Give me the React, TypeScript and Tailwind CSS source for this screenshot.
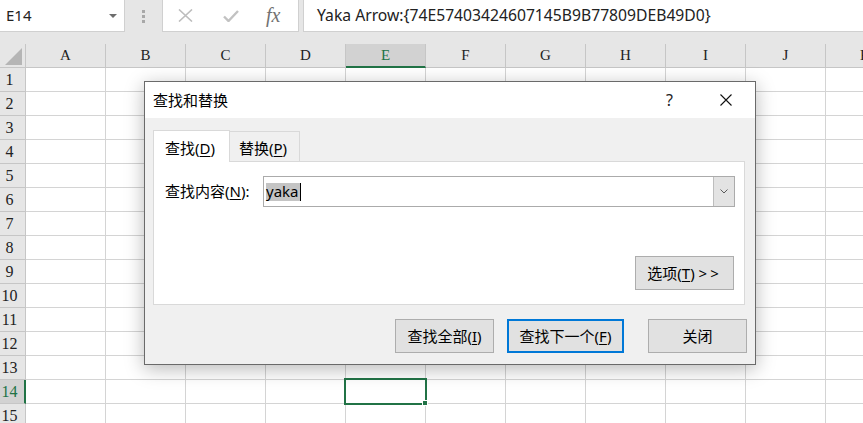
import React from 'react';

const COLS = ['A', 'B', 'C', 'D', 'E', 'F', 'G', 'H', 'I', 'J', 'K'];
const ROWS = Array.from({ length: 15 }, (_, i) => i + 1);

const ui = "font-['Noto_Sans','Noto_Sans_CJK_SC',sans-serif]";
const serif = "font-['Liberation_Serif',serif]";

function FormulaBar() {
  return (
    <div className={`flex h-[44px] items-start bg-[#e6e6e6] ${ui}`}>
      {/* Name box */}
      <div className="flex h-[32px] w-[125px] items-center justify-between border-r border-b border-[#d0d0d0] bg-white pl-[6px] pr-[7px] text-[15px] text-[#222]">
        <span>E14</span>
        <svg width="8" height="4" viewBox="0 0 8 4">
          <path d="M0 0h8L4 4z" fill="#6d6d6d" />
        </svg>
      </div>

      {/* Grip */}
      <div className="flex h-[32px] w-[37px] flex-col items-center justify-center gap-[2px]">
        {[0, 1, 2].map((i) => (
          <span key={i} className="h-[3px] w-[3px] bg-[#a8a8a8]" />
        ))}
      </div>

      {/* Cancel / enter / fx */}
      <div className="flex h-[32px] w-[137px] items-center border-x border-b border-[#d0d0d0] bg-white pl-[15px]">
        <svg width="15" height="13" viewBox="0 0 15 13">
          <path d="M1 0.5l13 12M14 0.5l-13 12" stroke="#bdbdbd" strokeWidth="1.6" fill="none" />
        </svg>
        <svg className="ml-[30px]" width="16" height="12" viewBox="0 0 16 12">
          <path d="M1 6.5l4.5 4.5L15 1" stroke="#c2c2c2" strokeWidth="2.4" fill="none" />
        </svg>
        <span className={`ml-[27px] -mt-[2px] text-[20px] italic text-[#727272] ${serif}`}>fx</span>
      </div>

      {/* Formula input */}
      <div className="ml-[4px] flex h-[32px] flex-1 items-center border-l border-b border-[#d0d0d0] bg-white pl-[13px] text-[15.7px] text-[#222] whitespace-nowrap">
        Yaka Arrow:{'{'}74E57403424607145B9B77809DEB49D0{'}'}
      </div>
    </div>
  );
}

function Sheet() {
  return (
    <div className={`relative grid grid-cols-[26px_repeat(11,80px)] auto-rows-[24px] text-[15px] text-[#222] ${serif}`}>
      {/* Corner */}
      <div className="flex items-end justify-end border-r border-b border-[#c6c6c6] bg-[#e6e6e6] pr-[3px] pb-[2px]">
        <svg width="17" height="17" viewBox="0 0 17 17">
          <path d="M17 0v17H0z" fill="#b5b5b5" />
        </svg>
      </div>
      {COLS.map((c) =>
        c === 'E' ? (
          <div key={c} className="flex items-center justify-center border-r border-b-2 border-r-[#c6c6c6] border-b-[#217346] bg-[#d2d2d2] text-[#217346]">
            {c}
          </div>
        ) : (
          <div key={c} className="flex items-center justify-center border-r border-b border-[#c6c6c6] bg-[#e6e6e6]">
            {c}
          </div>
        )
      )}

      {ROWS.map((r) => (
        <React.Fragment key={r}>
          {r === 14 ? (
            <div className="flex items-center justify-center border-r-2 border-b border-r-[#217346] border-b-[#c6c6c6] bg-[#d2d2d2] pr-[5px] text-[16px] text-[#217346]">
              {r}
            </div>
          ) : (
            <div className="flex items-center justify-center border-r border-b border-[#c6c6c6] bg-[#e6e6e6] pr-[6px] text-[16px]">
              {r}
            </div>
          )}
          {COLS.map((c) => (
            <div key={c} className="border-r border-b border-[#d4d4d4] bg-white" />
          ))}
        </React.Fragment>
      ))}

      {/* Active cell E14 */}
      <div className="absolute left-[344px] top-[334px] h-[27px] w-[83px] border-2 border-[#217346]">
        <span className="absolute -right-[3px] -bottom-[3px] h-[6px] w-[6px] border border-white bg-[#217346]" />
      </div>
    </div>
  );
}

function DlgButton({ children, focused, className = '' }: { children: React.ReactNode; focused?: boolean; className?: string }) {
  return (
    <div
      className={`flex h-[34px] items-center justify-center bg-[#e1e1e1] text-[15px] text-black ${
        focused ? 'border-2 border-[#0078d7]' : 'border border-[#adadad]'
      } ${className}`}
    >
      {children}
    </div>
  );
}

function FindDialog() {
  return (
    <div className={`absolute left-[144px] top-[81px] flex h-[284px] w-[612px] flex-col border border-[#6a6a6a] bg-[#f0f0f0] shadow-[0_4px_18px_rgba(0,0,0,0.28)] ${ui}`}>
      {/* Title bar */}
      <div className="flex h-[36px] items-center bg-white pl-[8px] pr-[23px] text-[15px] text-black">
        <span>查找和替换</span>
        <span className="ml-auto text-[16px] text-[#222]">?</span>
        <svg className="ml-[47px]" width="12" height="12" viewBox="0 0 12 12">
          <path d="M0.5 0.5l11 11M11.5 0.5l-11 11" stroke="#111" strokeWidth="1.1" fill="none" />
        </svg>
      </div>

      <div className="flex flex-1 flex-col px-[8px] pt-[12px] text-[15px] text-black">
        {/* Tabs */}
        <div className="flex h-[31px] items-end">
          <div className="relative z-10 -mb-px flex h-[32px] w-[77px] items-center border border-b-0 border-[#d9d9d9] bg-white pl-[11px] pt-[3px]">
            查找(<span className="underline underline-offset-2">D</span>)
          </div>
          <div className="flex h-[30px] w-[70px] items-center border border-l-0 border-b-0 border-[#d9d9d9] pl-[9px] pt-[3px]">
            替换(<span className="underline underline-offset-2">P</span>)
          </div>
        </div>

        {/* Panel */}
        <div className="flex h-[144px] w-[592px] flex-col border border-[#d9d9d9] bg-white">
          <div className="mt-[14px] flex items-center pl-[11px]">
            <span className="w-[98px]">
              查找内容(<span className="underline underline-offset-2">N</span>):
            </span>
            <div className="flex h-[31px] w-[472px] border border-[#ababab] bg-white">
              <div className="flex flex-1 items-center pl-[2px]">
                <span className="flex h-[18px] items-center bg-[#c4c4c4] pr-[1px] leading-none">yaka</span>
                <span className="h-[18px] w-px bg-black" />
              </div>
              <div className="flex w-[21px] items-center justify-center border-l border-[#bdbdbd] bg-[#e3e3e3]">
                <svg width="8" height="5" viewBox="0 0 8 5">
                  <path d="M0.5 0.5L4 4l3.5-3.5" stroke="#5a5a5a" strokeWidth="1" fill="none" />
                </svg>
              </div>
            </div>
          </div>
          <DlgButton className="mt-auto mr-[10px] mb-[14px] w-[99px] self-end">
            选项(<span className="underline underline-offset-2">T</span>)&nbsp;<span className="tracking-[3px]">&gt;&gt;</span>
          </DlgButton>
        </div>

        {/* Buttons */}
        <div className="mt-[14px] flex justify-end">
          <DlgButton className="w-[99px]">
            查找全部(<span className="underline underline-offset-2">I</span>)
          </DlgButton>
          <DlgButton focused className="ml-[13px] w-[117px]">
            查找下一个(<span className="underline underline-offset-2">F</span>)
          </DlgButton>
          <DlgButton className="ml-[24px] w-[99px]">关闭</DlgButton>
        </div>
      </div>
    </div>
  );
}

export default function App() {
  return (
    <div className="relative h-[423px] w-[863px] overflow-hidden bg-white">
      <FormulaBar />
      <Sheet />
      <FindDialog />
    </div>
  );
}
